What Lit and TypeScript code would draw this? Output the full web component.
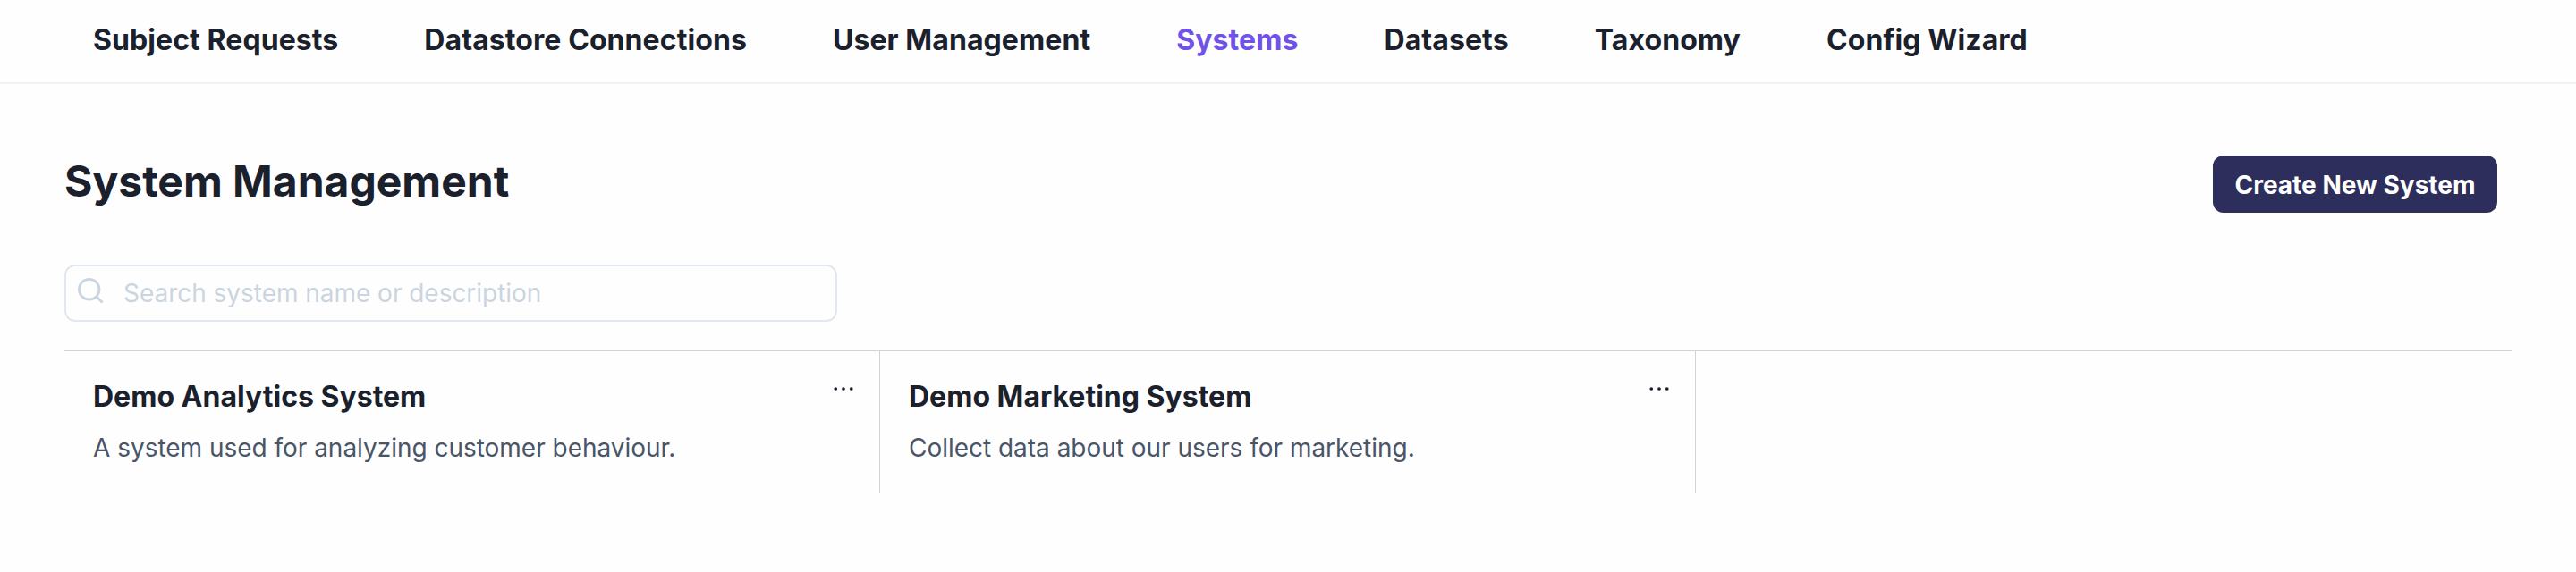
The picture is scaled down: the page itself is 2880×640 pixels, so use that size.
import { LitElement, html, css, svg } from "lit";
import { customElement, property } from "lit/decorators.js";
import { classMap } from "lit/directives/class-map.js";

interface System {
  name: string;
  description: string;
}

const NAV_ITEMS = [
  "Subject Requests",
  "Datastore Connections",
  "User Management",
  "Systems",
  "Datasets",
  "Taxonomy",
  "Config Wizard",
];

const SYSTEMS: System[] = [
  { name: "Demo Analytics System", description: "A system used for analyzing customer behaviour." },
  { name: "Demo Marketing System", description: "Collect data about our users for marketing." },
];

@customElement("nav-bar")
class NavBar extends LitElement {
  @property() active = "";

  static styles = css`
    :host {
      display: block;
    }
    .bar {
      display: flex;
      gap: 96px;
      box-sizing: border-box;
      height: 94px;
      padding: 20px 104px 0;
      border-bottom: 2px solid #edf2f7;
    }
    .link {
      font-size: 32px;
      line-height: 49px;
      font-weight: 700;
      letter-spacing: 0.08px;
      color: #1a202c;
      text-decoration: none;
      white-space: nowrap;
    }
    .link.active {
      color: #7152e8;
    }
  `;

  render() {
    return html`<nav class="bar">
      ${NAV_ITEMS.map(
        (item) => html`<a class=${classMap({ link: true, active: item === this.active })}>${item}</a>`
      )}
    </nav>`;
  }
}

@customElement("system-card")
class SystemCard extends LitElement {
  @property({ attribute: false }) system!: System;

  static styles = css`
    :host {
      display: block;
      box-sizing: border-box;
      height: 159px;
      padding: 27px 29px 0 32px;
      border-right: 1px solid #d3d3d3;
    }
    .head {
      display: flex;
      justify-content: space-between;
    }
    .name {
      margin: 0;
      font-size: 32px;
      line-height: 47px;
      font-weight: 700;
      color: #1a202c;
    }
    .more {
      display: block;
      width: 22px;
      height: 6px;
      margin-top: 12px;
    }
    .text {
      margin: 13px 0 0;
      font-size: 28px;
      line-height: 42px;
      letter-spacing: -0.02px;
      color: #4a5568;
    }
  `;

  render() {
    return html`
      <div class="head">
        <h2 class="name">${this.system.name}</h2>
        <svg class="more" viewBox="0 0 22 6" fill="#1a202c">
          ${[2.25, 11, 19.75].map((x) => svg`<circle cx=${x} cy="3" r="1.85" />`)}
        </svg>
      </div>
      <p class="text">${this.system.description}</p>
    `;
  }
}

@customElement("app-root")
class AppRoot extends LitElement {
  static styles = css`
    :host {
      display: block;
      min-height: 640px;
      background: #fefefe;
      font-family: Inter, "Liberation Sans", sans-serif;
    }
    .page {
      padding: 80px 72px 0;
    }
    .header {
      display: flex;
      align-items: flex-start;
      justify-content: space-between;
      padding-right: 16px;
    }
    .title {
      margin: 0;
      font-size: 48px;
      line-height: 57px;
      font-weight: 700;
      color: #1a202c;
    }
    .create {
      box-sizing: border-box;
      width: 318px;
      height: 64px;
      padding: 0;
      border: 0;
      border-radius: 12px;
      background: #2d2e5b;
      color: #fff;
      font: 700 28px/66px Inter, "Liberation Sans", sans-serif;
      text-align: center;
    }
    .search {
      display: flex;
      box-sizing: border-box;
      width: 864px;
      height: 64px;
      margin: 58px 0 32px;
      padding-left: 12px;
      border: 2px solid #e2e8f0;
      border-radius: 12px;
      color: #cbd5e0;
    }
    .glass {
      flex: none;
      width: 32px;
      height: 32px;
      margin-top: 12px;
    }
    .input {
      flex: 1;
      min-width: 0;
      margin-left: 20px;
      padding: 0;
      border: 0;
      outline: 0;
      background: transparent;
      font: 400 28px/42px Inter, "Liberation Sans", sans-serif;
      letter-spacing: -0.03px;
    }
    .input::placeholder {
      color: #cbd5e0;
      opacity: 1;
    }
    .grid {
      display: grid;
      grid-template-columns: repeat(3, 1fr);
      border-top: 1px solid #d3d3d3;
    }
  `;

  render() {
    return html`
      <nav-bar active="Systems"></nav-bar>
      <main class="page">
        <div class="header">
          <h1 class="title">System Management</h1>
          <button class="create">Create New System</button>
        </div>
        <div class="search">
          <svg class="glass" viewBox="0 0 32 32" fill="none" stroke="currentColor" stroke-width="2.8">
            <circle cx="13.7" cy="13.7" r="11.3" />
            <path d="M21.7 21.7 L28.6 28.6" />
          </svg>
          <input class="input" placeholder="Search system name or description" />
        </div>
        <section class="grid">
          ${SYSTEMS.map((s) => html`<system-card .system=${s}></system-card>`)}
        </section>
      </main>
    `;
  }
}
